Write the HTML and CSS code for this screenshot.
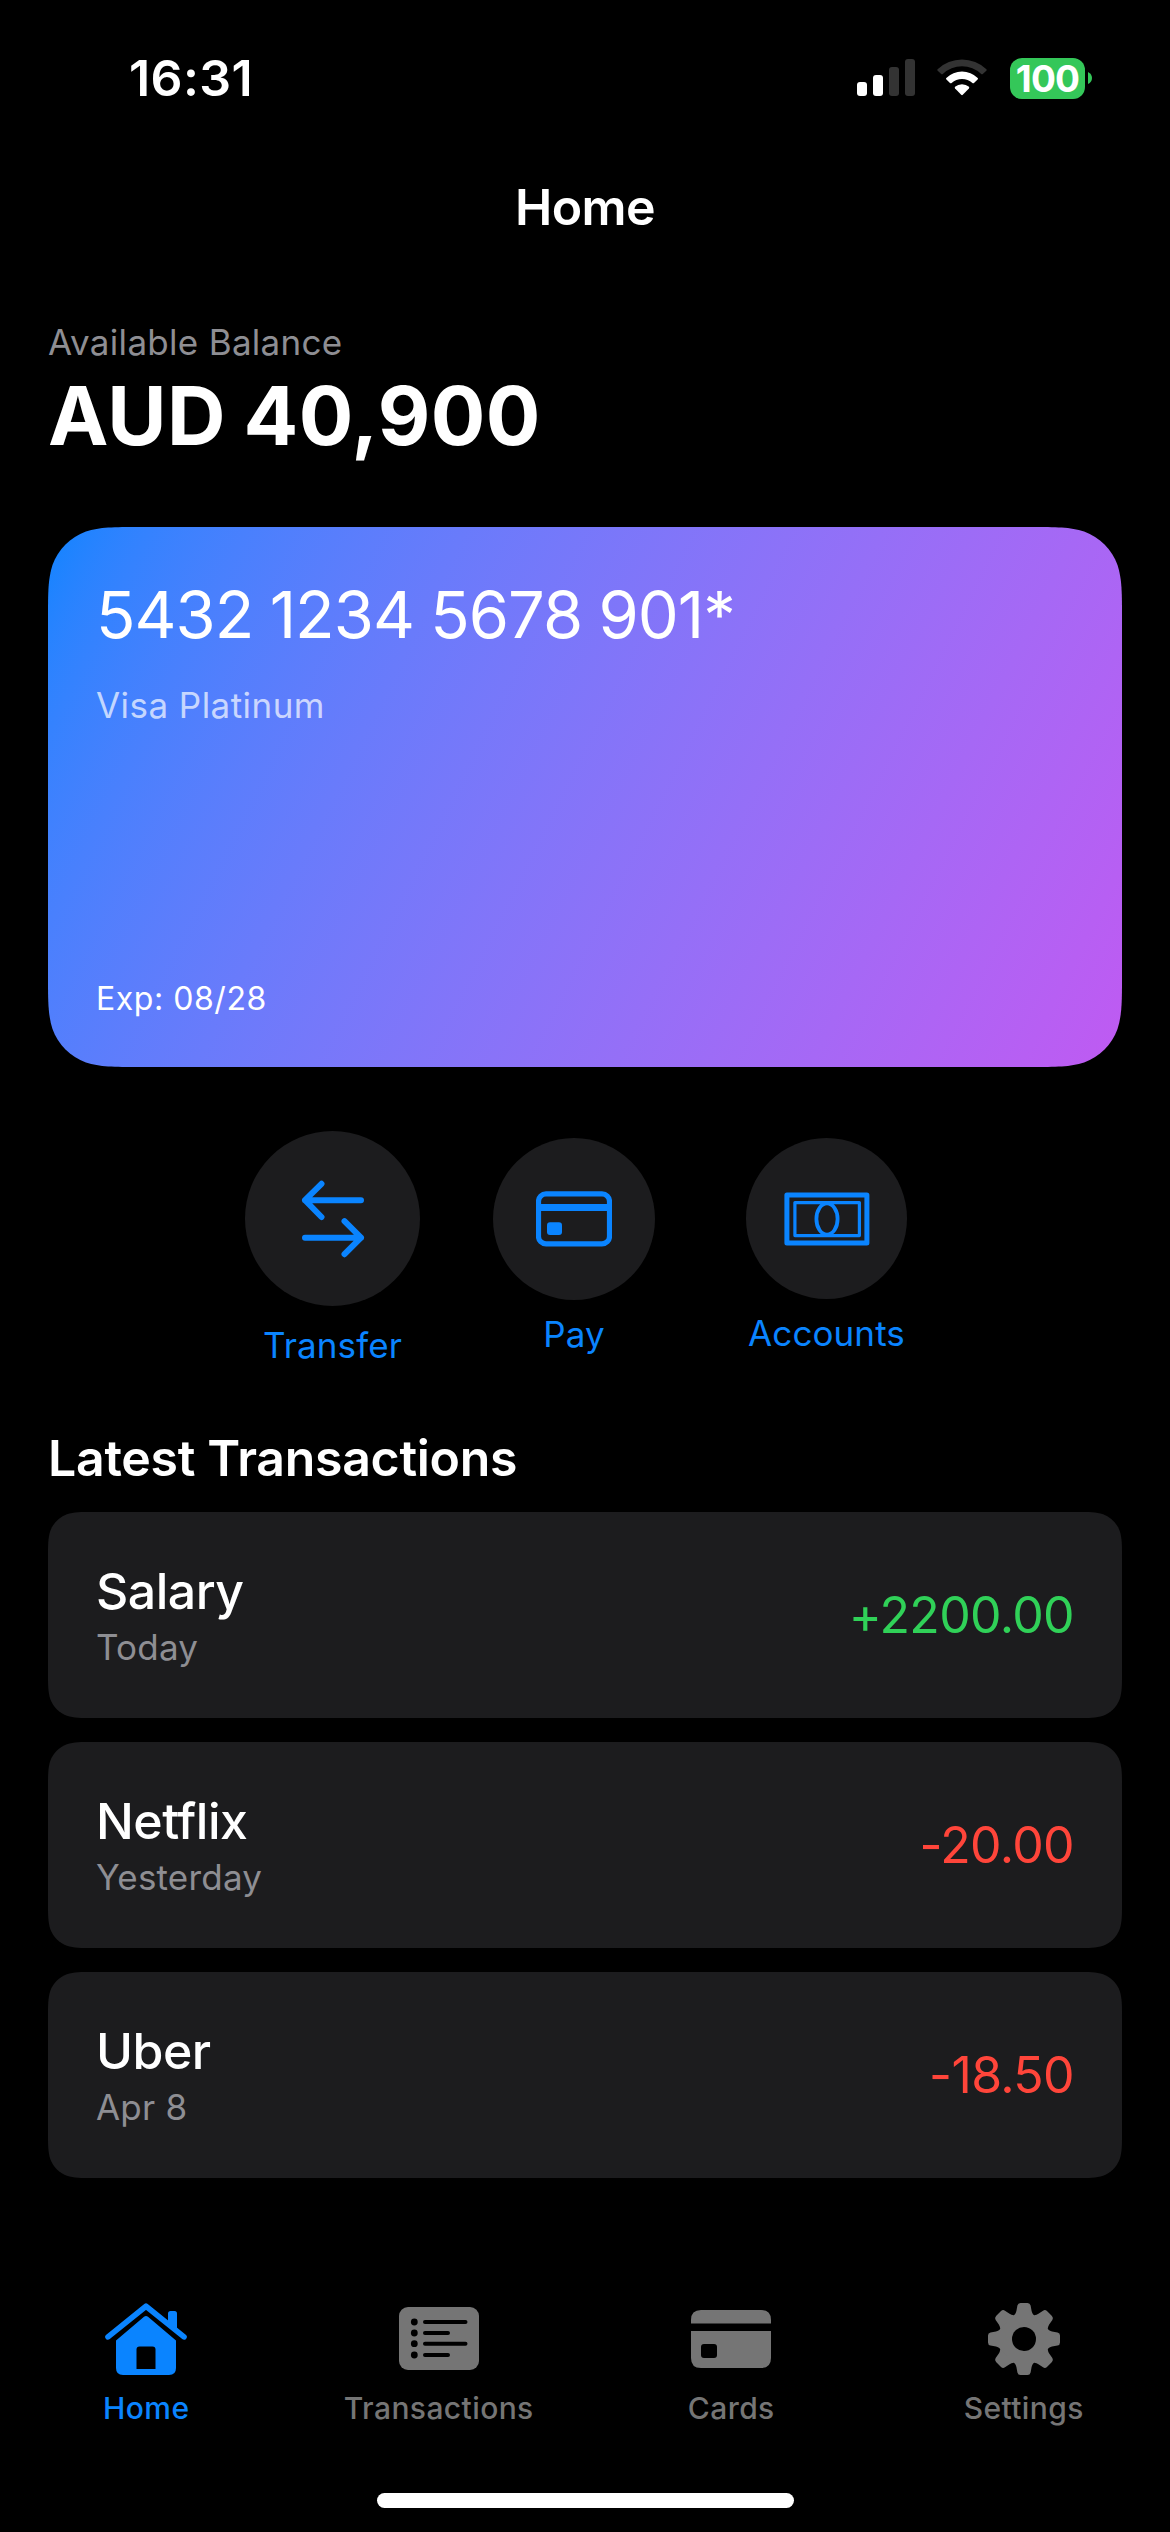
FILE: index.html
```html
<!DOCTYPE html>
<html lang="en">
<head>
<meta charset="utf-8">
<title>Home</title>
<link rel="stylesheet" href="styles.css">
</head>
<body>
<div class="screen">
  <header class="status">
    <span class="status-time">16:31</span>
    <span class="status-icons">
      <svg class="signal" width="58" height="38" viewBox="0 0 58 38">
        <rect x="0" y="23" width="10" height="14" rx="3" fill="#fff"/>
        <rect x="16" y="16" width="10" height="21" rx="3" fill="#fff"/>
        <rect x="32" y="8" width="10" height="29" rx="3" fill="#333"/>
        <rect x="48" y="0" width="10" height="37" rx="3" fill="#333"/>
      </svg>
      <svg class="wifi" width="50" height="38" viewBox="0 0 50 38">
        <path d="M0.6 10.2A35.5 35.5 0 0 1 49.4 10.2Q50 11 49.3 11.8L45.8 15Q45 15.6 44.2 14.9A28 28 0 0 0 5.8 14.9Q5 15.6 4.2 15L0.7 11.8Q0 11 0.6 10.2Z" fill="#333"/>
        <path d="M9.3 19A22.5 22.5 0 0 1 40.7 19Q41.4 19.8 40.6 20.6L37 24Q36.2 24.7 35.4 24A15.2 15.2 0 0 0 14.6 24Q13.8 24.7 13 24L9.4 20.6Q8.6 19.8 9.3 19Z" fill="#fff"/>
        <path d="M18 27.8A10.5 10.5 0 0 1 32 27.8Q32.6 28.6 31.9 29.4L25.8 35.8Q25 36.6 24.2 35.8L18.1 29.4Q17.4 28.6 18 27.8Z" fill="#fff"/>
      </svg>
      <span class="battery"><span class="battery-level">100</span></span>
      <svg class="battery-cap" width="4" height="12" viewBox="0 0 4 12"><path d="M0 0Q4 2 4 6T0 12Z" fill="#34c759"/></svg>
    </span>
  </header>
  <h1 class="title">Home</h1>

  <section class="balance">
    <div class="balance-label">Available Balance</div>
    <div class="balance-value">AUD 40,900</div>
  </section>

  <section class="card">
    <div class="card-number">5432 1234 5678 901*</div>
    <div class="card-type">Visa Platinum</div>
    <div class="card-exp">Exp: 08/28</div>
  </section>

  <nav class="actions">
    <a class="action action-transfer">
      <span class="disc">
        <svg width="64" height="78" viewBox="0 0 64 78" fill="none" stroke="#0a84ff" stroke-width="6" stroke-linecap="round" stroke-linejoin="round">
          <path d="M60 20.2H4M20.5 3.8L4 20.2L20.5 37M4 57.7H60M43.5 41.2L60 57.7L43.5 74.2"/>
        </svg>
      </span>
      <span class="action-name">Transfer</span>
    </a>
    <a class="action action-pay">
      <span class="disc">
        <svg width="76" height="56" viewBox="0 0 76 56">
          <rect x="2.5" y="2.9" width="71" height="50" rx="7.5" fill="none" stroke="#0a84ff" stroke-width="5.2"/>
          <rect x="4" y="13" width="68" height="7" fill="#0a84ff"/>
          <rect x="11" y="31.3" width="15" height="12.7" rx="3" fill="#0a84ff"/>
        </svg>
      </span>
      <span class="action-name">Pay</span>
    </a>
    <a class="action action-accounts">
      <span class="disc">
        <svg width="86" height="54" viewBox="0 0 86 54" fill="none" stroke="#0a84ff">
          <rect x="2.9" y="3" width="80" height="48" stroke-width="5" stroke-linejoin="round"/>
          <rect x="10.9" y="10.6" width="64.5" height="33" stroke-width="3.2" stroke-linejoin="round"/>
          <ellipse cx="43" cy="27" rx="10.6" ry="15.6" stroke-width="3.8"/>
        </svg>
      </span>
      <span class="action-name">Accounts</span>
    </a>
  </nav>

  <section class="latest">
    <h2 class="latest-title">Latest Transactions</h2>
    <article class="row">
      <div class="row-info"><div class="row-name">Salary</div><div class="row-date">Today</div></div>
      <div class="amount credit">+2200.00</div>
    </article>
    <article class="row">
      <div class="row-info"><div class="row-name">Netflix</div><div class="row-date">Yesterday</div></div>
      <div class="amount debit">-20.00</div>
    </article>
    <article class="row">
      <div class="row-info"><div class="row-name">Uber</div><div class="row-date">Apr 8</div></div>
      <div class="amount debit">-18.50</div>
    </article>
  </section>

  <nav class="tabs">
    <a class="tab tab-active">
      <svg width="82" height="72" viewBox="0 0 82 72">
        <path d="M3 33.5L41 2.8L79 33.5" transform="translate(0 .4)" fill="none" stroke="#0a84ff" stroke-width="5.6" stroke-linecap="round" stroke-linejoin="round"/>
        <path d="M63 19V10.500Q63 8 65.500 8H69.500Q72 8 72 10.500V27Z" fill="#0a84ff"/>
        <path d="M11 37.500L39 13.800Q41 12 43 13.800L71 37.500V65Q71 72 64 72H18Q11 72 11 65Z" fill="#0a84ff"/>
        <path d="M31.500 66V46.500Q31.500 43.500 34.500 43.500H47.500Q50.500 43.500 50.500 46.500V66Z" fill="#000"/>
      </svg>
      <span class="tab-name">Home</span>
    </a>
    <a class="tab">
      <svg width="82" height="72" viewBox="0 0 82 72">
        <rect x="1" y="4" width="80" height="63" rx="9" fill="#757575"/>
        <g fill="#000"><circle cx="16.300" cy="19" r="3.400"/><circle cx="16.300" cy="30" r="3.400"/><circle cx="16.300" cy="40.700" r="3.400"/><circle cx="16.300" cy="52" r="3.400"/></g>
        <path d="M27 19H67.500M27 30H50M27 40.700H67.500M27 52H50" stroke="#000" stroke-width="4" stroke-linecap="round"/>
      </svg>
      <span class="tab-name">Transactions</span>
    </a>
    <a class="tab">
      <svg width="82" height="72" viewBox="0 0 82 72">
        <path d="M1 20.500V17Q1 7 11 7H71Q81 7 81 17V20.500ZM1 28H81V55Q81 65 71 65H11Q1 65 1 55Z" fill="#757575"/>
        <rect x="11" y="41" width="16" height="14" rx="3" fill="#000"/>
      </svg>
      <span class="tab-name">Cards</span>
    </a>
    <a class="tab">
      <svg width="82" height="72" viewBox="0 0 82 72">
        <g transform="translate(41 36)" fill="#757575">
          <circle r="26"/>
          <path id="tooth" d="M-9.500 -24Q-8 -26 -7.600 -28L-6.600 -33.500Q-6 -36 -3.500 -36H3.500Q6 -36 6.600 -33.500L7.600 -28Q8 -26 9.500 -24Z"/>
          <use href="#tooth" transform="rotate(45)"/><use href="#tooth" transform="rotate(90)"/><use href="#tooth" transform="rotate(135)"/><use href="#tooth" transform="rotate(180)"/><use href="#tooth" transform="rotate(225)"/><use href="#tooth" transform="rotate(270)"/><use href="#tooth" transform="rotate(315)"/>
          <circle r="12" fill="#000"/>
        </g>
      </svg>
      <span class="tab-name">Settings</span>
    </a>
  </nav>
  <div class="home-indicator"></div>
</div>
</body>
</html>
```
FILE: styles.css
```css
* { box-sizing: border-box; }
body {
  margin: 0;
  background: #000;
  color: #fff;
  font-family: Inter, "Liberation Sans", sans-serif;
}
.screen {
  width: 1170px;
  height: 2532px;
  display: flex;
  flex-direction: column;
}
.status {
  height: 156px;
  padding: 0 78px 0 129px;
  display: flex;
  justify-content: space-between;
  align-items: center;
}
.status-time { font-size: 50px; line-height: 60px; font-weight: 600; letter-spacing: .4px; }
.status-icons { display: flex; align-items: center; }
.wifi { margin-left: 22px; }
.battery {
  width: 75px;
  height: 41px;
  margin-left: 23px;
  border-radius: 12px;
  background: #34c759;
  display: flex;
  justify-content: center;
  align-items: center;
}
.battery-level { font-size: 37px; line-height: 41px; font-weight: 700; letter-spacing: -.8px; }
.battery-cap { margin-left: 3px; }
.title {
  margin: 0;
  height: 102px;
  line-height: 102px;
  text-align: center;
  font-size: 50px;
  font-weight: 600;
  letter-spacing: -.6px;
}
.balance { height: 269px; padding: 63px 48px 0; }
.balance-label { font-size: 35px; line-height: 42px; color: #8e8e93; letter-spacing: .3px; }
.balance-value { font-size: 81px; line-height: 106px; font-weight: 700; letter-spacing: .4px; word-spacing: -2px; }
/* Card and rows use continuous-curvature corners */
.card {
  height: 540px;
  margin: 0 48px;
  padding: 49px 48px 48px;
  display: flex;
  flex-direction: column;
  flex: none;
  background: linear-gradient(116.65deg in oklab, #0a84ff, #bf5af2);
  clip-path: path("M91.7 0H982.3C1008.7 0 1021.9 0 1036.1 4.5C1051.6 10.1 1063.9 22.4 1069.5 37.9C1074 52.1 1074 65.3 1074 91.7V448.3C1074 474.7 1074 487.9 1069.5 502.1C1063.9 517.6 1051.6 529.9 1036.1 535.5C1021.9 540 1008.7 540 982.3 540H91.7C65.3 540 52.1 540 37.9 535.5C22.4 529.9 10.1 517.6 4.5 502.1C0 487.9 0 474.7 0 448.3V91.7C0 65.3 0 52.1 4.5 37.9C10.1 22.4 22.4 10.1 37.9 4.5C52.1 0 65.3 0 91.7 0Z");
}
.card-number { font-size: 65px; line-height: 78px; letter-spacing: -.95px; word-spacing: -1.2px; }
.card-type { margin-top: 30px; font-size: 35px; line-height: 42px; color: rgba(255,255,255,.7); letter-spacing: .45px; }
.card-exp { margin-top: auto; font-size: 32px; line-height: 40px; letter-spacing: .55px; }
.actions {
  height: 364px;
  padding: 64px 0 0 245px;
  display: flex;
  align-items: flex-start;
}
.action { display: flex; flex-direction: column; align-items: center; color: #0a84ff; }
.disc {
  border-radius: 50%;
  background: #1c1c1e;
  display: flex;
  align-items: center;
  justify-content: center;
}
.action-name { font-size: 35px; line-height: 42px; white-space: nowrap; letter-spacing: .1px; }
.action-transfer { width: 175px; gap: 18px; }
.action-transfer .disc { width: 175px; height: 175px; }
.action-pay { width: 162px; margin: 7px 0 0 73px; gap: 13px; }
.action-pay .disc { width: 162px; height: 162px; }
.action-accounts { width: 161px; margin: 7px 0 0 91px; gap: 13px; }
.action-accounts .disc { width: 161px; height: 161px; }
.latest { padding: 0 48px; display: flex; flex-direction: column; gap: 24px; }
.latest-title { margin: 0; height: 57px; line-height: 54px; font-size: 50px; font-weight: 600; letter-spacing: -.3px; }
.row {
  height: 206px;
  padding: 0 48px;
  background: #1c1c1e;
  display: flex;
  justify-content: space-between;
  align-items: center;
  clip-path: path("M45.9 0H1028.1C1041.3 0 1047.9 0 1055.1 2.25C1062.8 5.1 1068.9 11.2 1071.75 18.9C1074 26.1 1074 32.7 1074 45.9V160.1C1074 173.3 1074 179.9 1071.75 187.1C1068.9 194.8 1062.8 200.9 1055.1 203.75C1047.9 206 1041.3 206 1028.1 206H45.9C32.7 206 26.1 206 18.9 203.75C11.2 200.9 5.1 194.8 2.25 187.1C0 179.9 0 173.3 0 160.1V45.9C0 32.7 0 26.1 2.25 18.9C5.1 11.2 11.2 5.1 18.9 2.25C26.1 0 32.7 0 45.9 0Z");
}
.row-name { font-size: 50px; line-height: 62px; font-weight: 500; letter-spacing: -.5px; }
.row-date { padding-top: 3px; font-size: 35px; line-height: 45px; color: #8e8e93; letter-spacing: .2px; }
.amount { font-size: 50px; line-height: 60px; letter-spacing: -.65px; }
.credit { color: #30d158; }
.debit { color: #ff453a; }
.tabs { height: 190px; margin-top: 125px; display: flex; }
.tab {
  flex: 1;
  display: flex;
  flex-direction: column;
  align-items: center;
  gap: 14px;
  color: #757575;
}
.tab-active { color: #0a84ff; }
.tab-name { font-size: 30px; line-height: 38px; font-weight: 500; letter-spacing: .4px; }
.home-indicator { width: 417px; height: 15px; border-radius: 8px; background: #fff; margin: 0 auto; }
```
